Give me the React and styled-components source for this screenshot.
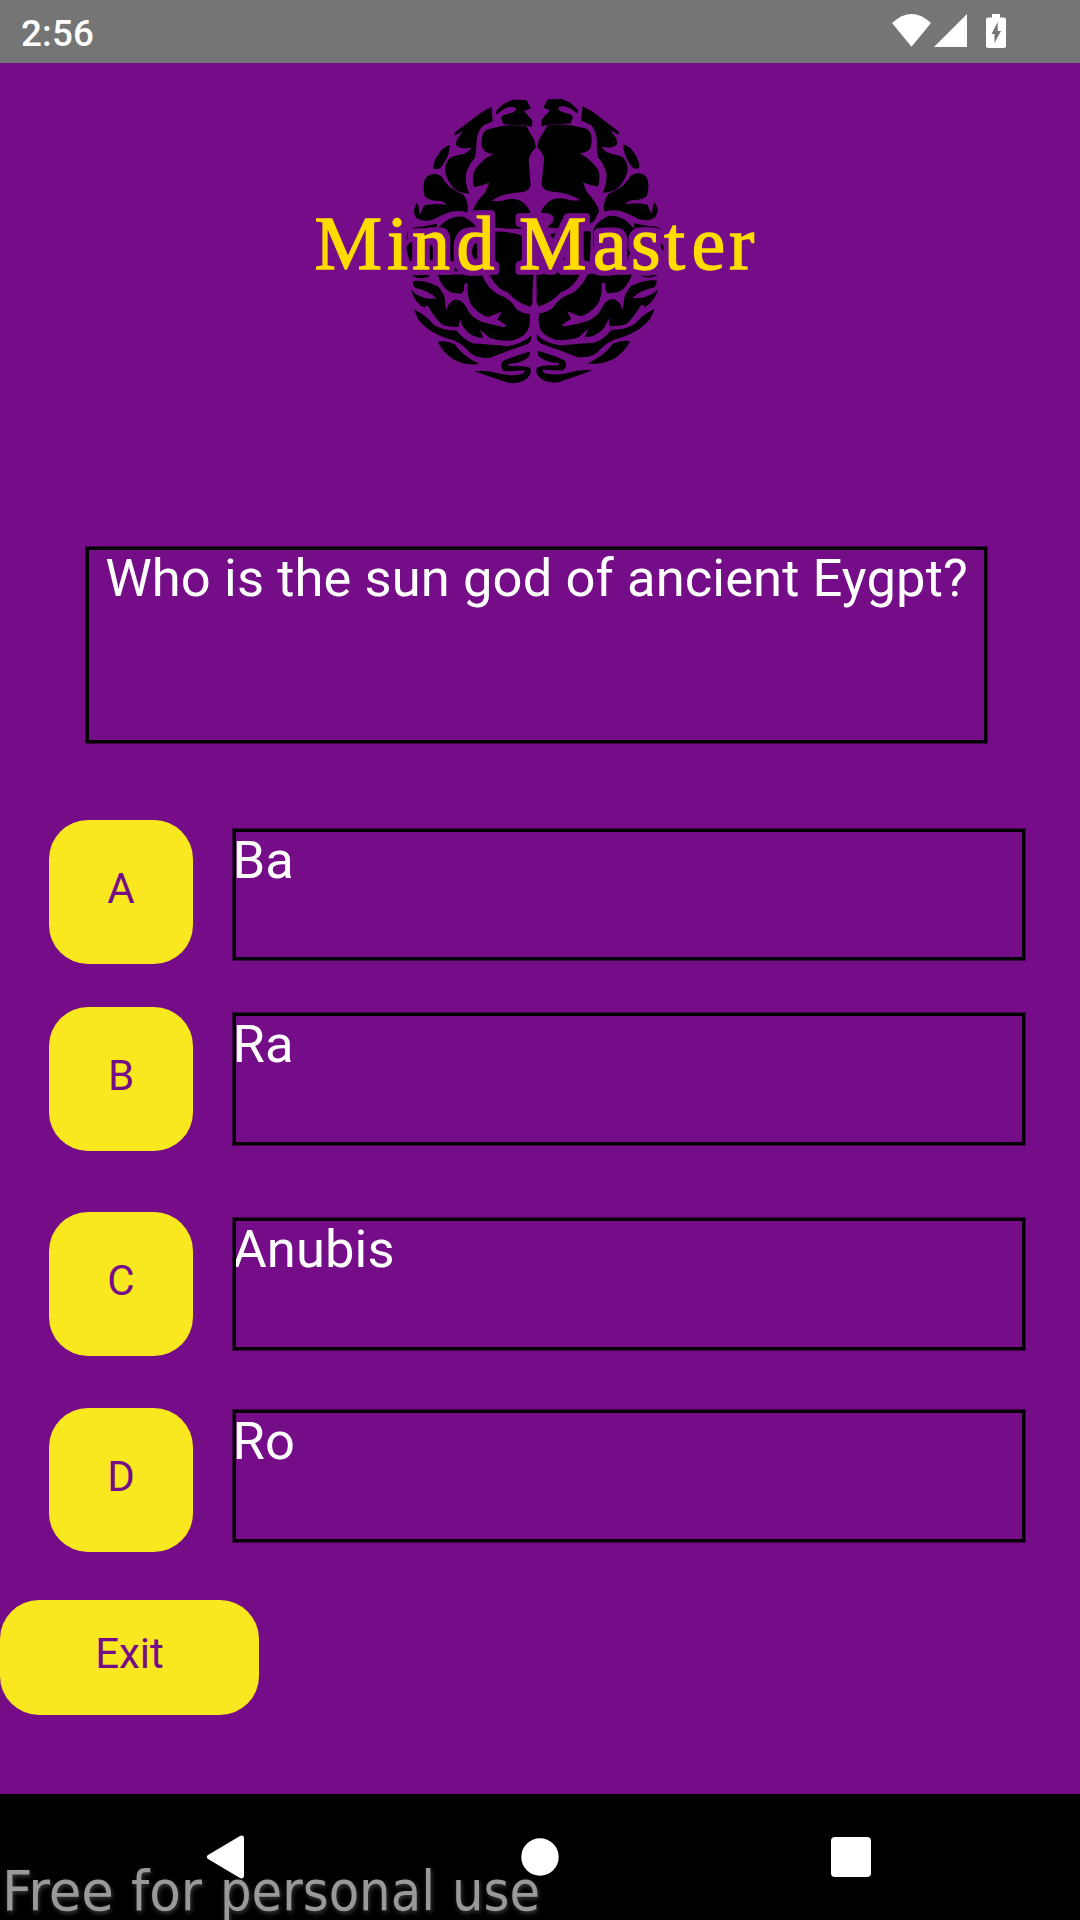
import React from "react";
import styled, { createGlobalStyle } from "styled-components";

const PURPLE = "#750d88";
const YELLOW = "#f9e71f";

const GlobalStyle = createGlobalStyle`
  * { box-sizing: border-box; }
  body { margin: 0; background: #000; font-family: Roboto, sans-serif; }
`;

const Screen = styled.div`
  position: relative;
  display: flex;
  flex-direction: column;
  width: 1080px;
  height: 1920px;
  overflow: hidden;
  background: ${PURPLE};
`;

const StatusBar = styled.header`
  display: flex;
  justify-content: space-between;
  align-items: flex-start;
  flex: none;
  height: 63px;
  padding-left: 21px;
  background: #757575;
`;

const Clock = styled.span`
  padding-top: 12px;
  color: #fff;
  font-size: 36.75px;
  font-weight: 500;
  line-height: 43px;
  letter-spacing: 0.2px;
`;

const StatusIcons = styled.svg`
  display: block;
  width: 220px;
  height: 63px;
`;

const Content = styled.main`
  display: flex;
  flex-direction: column;
  flex: none;
  height: 1731px;
`;

const Logo = styled.svg`
  display: block;
  flex: none;
  align-self: center;
  width: 480px;
  height: 327px;
`;

const LogoText = styled.text`
  font-family: "Liberation Serif", serif;
  font-size: 76px;
  fill: #ffdc00;
  stroke: #ffdc00;
  stroke-width: 1.3px;
`;

const Frame = styled.div`
  height: ${(p) => p.$height}px;
  outline: 3px solid #000;
  outline-offset: -3px;
  box-shadow: 0 0 0 1px rgba(0, 0, 0, 0.5);
  color: #fff;
  font-size: 52.5px;
  line-height: 62px;
  letter-spacing: 0.1px;
`;

const Question = styled(Frame)`
  flex: none;
  width: 901px;
  margin: 157px 0 0 86px;
  text-align: center;
`;

const Answers = styled.div`
  display: flex;
  flex-direction: column;
  flex: none;
  margin-top: 77px;
  padding: 0 55px 0 49px;
`;

const AnswerRow = styled.div`
  display: flex;
  align-items: flex-start;
  gap: 40px;
  margin-bottom: ${(p) => p.$gap}px;
`;

const AnswerText = styled(Frame)`
  flex: 1;
  margin-top: ${(p) => p.$drop}px;
  text-indent: -0.5px;
`;

const Button = styled.button`
  display: flex;
  flex: none;
  align-items: center;
  justify-content: center;
  width: ${(p) => p.$width}px;
  height: ${(p) => p.$height}px;
  padding: 0 0 8px;
  border: 0;
  border-radius: 39px;
  background: ${YELLOW};
  color: ${PURPLE};
  font-family: Roboto, sans-serif;
  font-size: 42px;
  line-height: 49px;
`;

const NavBar = styled.nav`
  flex: none;
  height: 126px;
  background: #000;
`;

const NavIcons = styled.svg`
  display: block;
  width: 1080px;
  height: 126px;
  fill: #fff;
`;

const Watermark = styled.svg`
  position: absolute;
  left: 0;
  bottom: 0;
  width: 560px;
  height: 70px;
  filter: drop-shadow(1px 2px 2px rgba(120, 120, 120, 0.5));
`;

const WatermarkText = styled.text`
  font-family: "DejaVu Sans Condensed", "DejaVu Sans", sans-serif;
  font-size: 55px;
  fill: #999;
`;

function BrainHalf() {
  return (
    <>
      <path d="M588 105 L590 92 L612 72 L640 60 L680 62 L693 86 L672 95 L697 122 L696 143 L680 138 L610 134 L603 115 L608 108 L640 98 Q652 90 645 84 Q628 78 610 90Z" />
      <path d="M575 82 L545 98 L465 158 L463 168 L490 155 Q466 180 468 195 Q475 208 500 206 L515 204 Q505 222 480 226 Q450 230 442 245 Q432 265 436 280 Q440 300 461 327 Q475 340 508 342 Q495 315 498 285 Q505 255 525 235 Q530 210 530 180 Q535 150 550 138 L578 125Z" />
      <path d="M450 197 Q430 198 408 235 Q396 262 402 268 Q420 275 432 250 Q450 222 450 197Z" />
      <path d="M603 140 Q640 134 680 140 L690 160 Q708 185 707 205 Q690 222 686 240 Q690 290 692 315 Q688 338 660 338 Q600 344 575 364 Q600 368 620 360 Q660 352 680 380 Q695 400 690 402 Q665 402 655 412 Q646 425 668 442 L668 446 Q640 450 580 444 L550 440 L530 425 L517 397 Q525 370 555 340 L568 310 Q545 320 522 323 Q515 300 522 275 Q540 245 580 223 Q550 222 546 200 Q540 165 560 150 Q580 145 603 140Z" />
      <path d="M374 350 Q366 310 378 295 Q395 275 425 290 Q440 325 490 345 Q508 370 502 398 Q480 392 455 396 Q420 408 400 420 Q370 430 348 415 Q340 400 342 390 L350 370 Q358 378 358 405 Q364 400 372 378 Q400 370 438 376 Q435 368 420 364 Q385 364 374 350Z" />
      <path d="M325 455 Q340 440 365 442 L411 433 L410 445 Q380 450 345 460 Q325 470 320 485 Q316 465 325 455Z" />
      <path d="M318 505 Q350 455 415 445 Q450 405 490 412 Q520 425 532 450 L532 570 L420 580 L330 550Z" />
      <path d="M540 458 Q620 450 670 470 L712 475 L712 555 L700 590 L697 650 Q700 675 690 682 Q650 670 625 640 Q590 630 568 585 L540 560Z" />
      <g transform="translate(0 450)">
        <path d="M335 138 Q365 134 390 138 Q385 146 360 146 Q345 144 335 138Z" />
        <path d="M405 135 L545 135 Q565 180 595 195 Q630 205 650 240 Q675 255 688 252 Q692 270 688 290 Q680 320 640 332 Q600 338 568 325 L540 300 L550 325 Q520 325 500 305 Q485 290 480 268 L476 292 Q440 292 425 285 Q400 260 385 230 L378 228 L372 235 Q345 220 332 180 Q350 200 380 207 L410 208 Q390 185 345 175 Q338 165 338 155 Q370 150 412 170Z" />
        <path
          fill={PURPLE}
          d="M398 133 L412 133 Q425 178 455 190 L484 193 Q495 185 492 165 L503 160 Q500 205 515 228 Q540 258 565 262 L605 247 L592 270 L620 288 L612 293 Q570 285 545 277 Q510 262 500 235 Q485 208 465 211 Q448 215 438 243 L434 205 Q430 188 410 166Z"
        />
        <path d="M342 240 Q380 258 400 285 Q425 303 470 303 Q490 330 520 342 Q580 345 620 350 Q665 345 694 318 Q696 335 680 345 Q620 365 570 385 Q530 388 510 370 Q490 345 460 332 Q390 315 355 270Z" />
        <path d="M413 337 Q440 332 465 345 Q490 382 538 403 Q500 410 460 390 Q430 370 413 337Z" />
        <path d="M690 366 L688 380 Q670 400 625 403 Q622 410 640 410 Q670 408 690 415 Q698 430 680 448 Q655 465 625 460 Q580 445 525 425 Q560 420 600 433 Q635 440 660 435 Q680 428 672 423 Q640 425 612 425 Q598 412 608 395 Q640 380 690 366Z" />
      </g>
    </>
  );
}

function MindMasterLogo() {
  return (
    <Logo viewBox="300 63 480 327">
      <defs>
        <filter id="halo" x="-5%" y="-20%" width="110%" height="140%" colorInterpolationFilters="sRGB">
          <feMorphology in="SourceAlpha" operator="dilate" radius="4" />
          <feGaussianBlur stdDeviation="1.8" />
          <feComponentTransfer result="spread">
            <feFuncA type="linear" slope="5" intercept="-0.8" />
          </feComponentTransfer>
          <feFlood floodColor={PURPLE} />
          <feComposite in2="spread" operator="in" result="halo" />
          <feMerge>
            <feMergeNode in="halo" />
            <feMergeNode in="SourceGraphic" />
          </feMerge>
        </filter>
      </defs>
      <g transform="translate(300 79.5) scale(0.33333)">
        <BrainHalf />
        <g transform="matrix(-1 0 -0.027 1 1425 -2)">
          <BrainHalf />
        </g>
      </g>
      <LogoText filter="url(#halo)" y="269" x="314.5 387 412 456.5 500 519 593 631 664 691.5 729">
        Mind Master
      </LogoText>
    </Logo>
  );
}

const answers = [
  { letter: "A", text: "Ba", drop: 9, height: 131, gap: 43 },
  { letter: "B", text: "Ra", drop: 6, height: 132, gap: 61 },
  { letter: "C", text: "Anubis", drop: 6, height: 132, gap: 52 },
  { letter: "D", text: "Ro", drop: 2, height: 132, gap: 48 },
];

const watermarkWords = [
  { text: "Free", x: 2, length: 112 },
  { text: "for", x: 131, length: 71 },
  { text: "personal", x: 220, length: 215 },
  { text: "use", x: 452, length: 88 },
];

export default function App() {
  return (
    <>
      <GlobalStyle />
      <Screen>
        <StatusBar>
          <Clock>2:56</Clock>
          <StatusIcons viewBox="0 0 220 63" fill="#fff">
            <path d="M32 23 Q51.5 5 71 23 L51.5 46.7Z" />
            <path d="M107 14 V47 H74Z" />
            <path
              fillRule="evenodd"
              d="M132 14 h8 v3.5 h4 q2 0 2 2 v26.5 q0 2 -2 2 h-16 q-2 0 -2 -2 v-26.5 q0 -2 2 -2 h4Z M137.7 22 L131.5 34 H134.5 V43 L141 31 H137.7Z"
            />
          </StatusIcons>
        </StatusBar>
        <Content>
          <MindMasterLogo />
          <Question $height={196}>Who is the sun god of ancient Eygpt?</Question>
          <Answers>
            {answers.map((a) => (
              <AnswerRow key={a.letter} $gap={a.gap}>
                <Button $width={144} $height={144}>{a.letter}</Button>
                <AnswerText $height={a.height} $drop={a.drop}>{a.text}</AnswerText>
              </AnswerRow>
            ))}
          </Answers>
          <Button $width={259} $height={115}>Exit</Button>
        </Content>
        <NavBar>
          <NavIcons viewBox="0 0 1080 126">
            <path d="M208 61 L240 42 Q244 40.500 244 44.500 V81 Q244 85.500 240 84 L208 65 Q205.500 63 208 61Z" />
            <circle cx="540" cy="63" r="18.7" />
            <rect x="831" y="43" width="40" height="40" rx="4" />
          </NavIcons>
        </NavBar>
        <Watermark viewBox="0 0 560 70">
          <WatermarkText y="59.5">
            {watermarkWords.map((w) => (
              <tspan key={w.text} x={w.x} textLength={w.length} lengthAdjust="spacingAndGlyphs">
                {w.text}
              </tspan>
            ))}
          </WatermarkText>
        </Watermark>
      </Screen>
    </>
  );
}
